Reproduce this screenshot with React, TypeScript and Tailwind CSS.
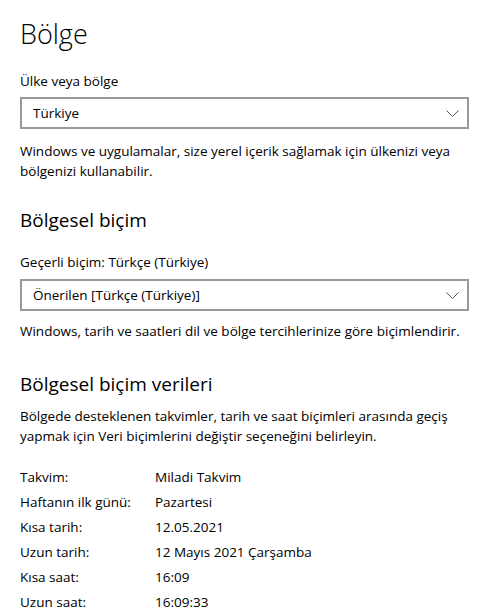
const Chevron = () => (
  <svg width="13" height="7" viewBox="0 0 13 7" fill="none">
    <path d="M0.5 0.5 L6.5 6.5 L12.5 0.5" stroke="#555" strokeWidth="1" />
  </svg>
);

const Select = ({ value }: { value: string }) => (
  <div className="flex h-[32px] w-[449px] items-center justify-between border-2 border-[#999] pl-[11px] pr-[8px]">
    <span>{value}</span>
    <Chevron />
  </div>
);

const rows: [string, string][] = [
  ["Takvim:", "Miladi Takvim"],
  ["Haftanın ilk günü:", "Pazartesi"],
  ["Kısa tarih:", "12.05.2021"],
  ["Uzun tarih:", "12 Mayıs 2021 Çarşamba"],
  ["Kısa saat:", "16:09"],
  ["Uzun saat:", "16:09:33"],
];

export default function App() {
  return (
    <div className="min-h-screen bg-white pl-[20px] pt-[14px] text-[13.5px] leading-[20px] text-black [font-family:'Open_Sans',sans-serif]">
      <h1 className="text-[27px] font-light leading-[40px]">Bölge</h1>

      <p className="mt-[17px]">Ülke veya bölge</p>
      <div className="mt-[6px]">
        <Select value="Türkiye" />
      </div>
      <p className="mt-[12px] w-[450px]">
        Windows ve uygulamalar, size yerel içerik sağlamak için ülkenizi veya bölgenizi kullanabilir.
      </p>

      <h2 className="mt-[25px] text-[19px] leading-[28px]">Bölgesel biçim</h2>
      <p className="mt-[18px]">Geçerli biçim: Türkçe (Türkiye)</p>
      <div className="mt-[7px]">
        <Select value="Önerilen [Türkçe (Türkiye)]" />
      </div>
      <p className="mt-[10px]">Windows, tarih ve saatleri dil ve bölge tercihlerinize göre biçimlendirir.</p>

      <h2 className="mt-[29px] text-[19px] leading-[28px]">Bölgesel biçim verileri</h2>
      <p className="mt-[8px] w-[450px]">
        Bölgede desteklenen takvimler, tarih ve saat biçimleri arasında geçiş yapmak için Veri biçimlerini değiştir seçeneğini belirleyin.
      </p>

      <div className="mt-[21px] flex flex-col gap-[5px]">
        {rows.map(([k, v]) => (
          <div key={k} className="grid grid-cols-[135px_1fr]">
            <span>{k}</span>
            <span>{v}</span>
          </div>
        ))}
      </div>
    </div>
  );
}
